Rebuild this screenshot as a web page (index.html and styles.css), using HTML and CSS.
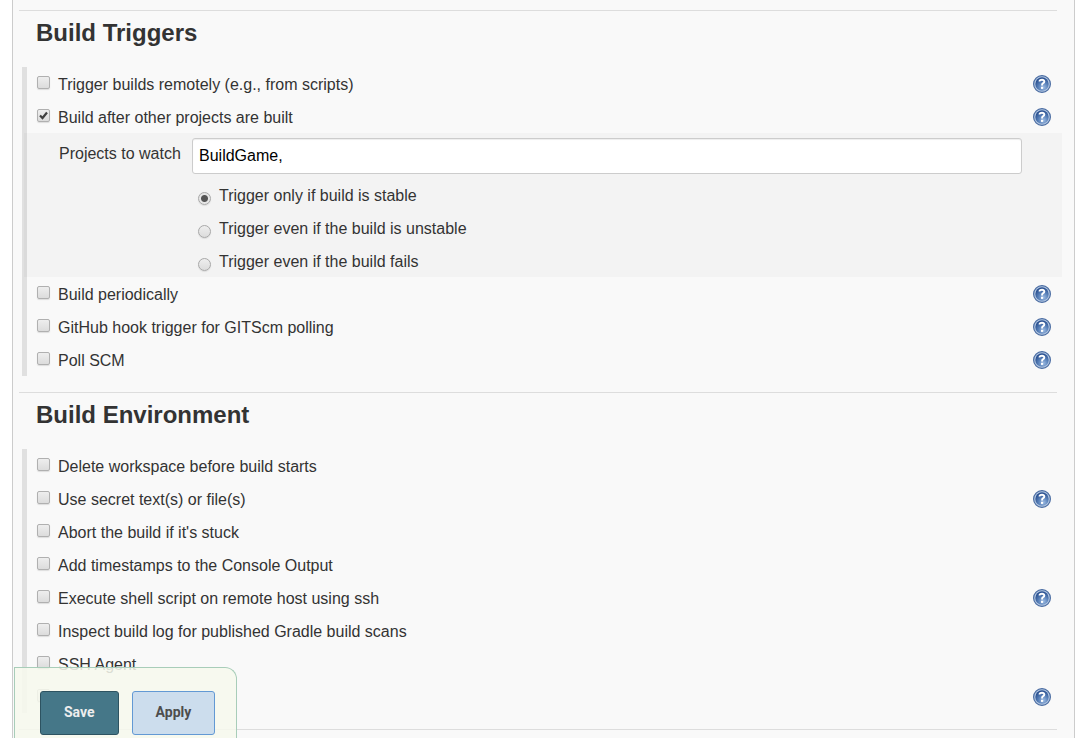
FILE: index.html
```html
<!DOCTYPE html>
<html lang="en">
<head>
<meta charset="utf-8">
<title>Build configuration</title>
<link rel="stylesheet" href="styles.css">
</head>
<body>
<svg class="sprite" aria-hidden="true">
  <defs>
    <radialGradient id="ball" cx="0.6" cy="0.75" r="0.7">
      <stop offset="0" stop-color="#9dbbe2"/>
      <stop offset="0.5" stop-color="#5a82ba"/>
      <stop offset="1" stop-color="#2a5090"/>
    </radialGradient>
    <symbol id="help" viewBox="0 0 18 18">
      <circle cx="9" cy="9" r="8.4" fill="#b4c8e2" stroke="#4a6ca2" stroke-width="1.2"/>
      <circle cx="9" cy="9" r="6.7" fill="url(#ball)"/>
      <path d="M6.6 6.6V5.7Q6.9 4.7 9 4.7T11.3 6.4Q11.3 7.6 10.2 8.2T9.1 9.8V10.4" fill="none" stroke="#fff" stroke-width="1.9"/>
      <rect x="8" y="11.8" width="2.1" height="2.1" fill="#fff"/>
    </symbol>
  </defs>
</svg>
<form class="panel">
  <section class="section">
    <h2 class="title">Build Triggers</h2>
    <div class="group">
      <div class="row"><label class="option"><input class="check" type="checkbox">Trigger builds remotely (e.g., from scripts)</label><button class="help" type="button" aria-label="Help"><svg class="icon"><use href="#help"/></svg></button></div>
      <div class="row"><label class="option"><input class="check" type="checkbox" checked>Build after other projects are built</label><button class="help" type="button" aria-label="Help"><svg class="icon"><use href="#help"/></svg></button></div>
      <div class="nested">
        <label class="caption" for="watch">Projects to watch</label>
        <div class="fields">
          <input class="text" id="watch" type="text" value="BuildGame,">
          <label class="choice"><input class="radio" type="radio" name="threshold" checked>Trigger only if build is stable</label>
          <label class="choice"><input class="radio" type="radio" name="threshold">Trigger even if the build is unstable</label>
          <label class="choice"><input class="radio" type="radio" name="threshold">Trigger even if the build fails</label>
        </div>
      </div>
      <div class="row"><label class="option"><input class="check" type="checkbox">Build periodically</label><button class="help" type="button" aria-label="Help"><svg class="icon"><use href="#help"/></svg></button></div>
      <div class="row"><label class="option"><input class="check" type="checkbox">GitHub hook trigger for GITScm polling</label><button class="help" type="button" aria-label="Help"><svg class="icon"><use href="#help"/></svg></button></div>
      <div class="row"><label class="option"><input class="check" type="checkbox">Poll SCM</label><button class="help" type="button" aria-label="Help"><svg class="icon"><use href="#help"/></svg></button></div>
    </div>
  </section>
  <section class="section">
    <h2 class="title">Build Environment</h2>
    <div class="group">
      <div class="row"><label class="option"><input class="check" type="checkbox">Delete workspace before build starts</label></div>
      <div class="row"><label class="option"><input class="check" type="checkbox">Use secret text(s) or file(s)</label><button class="help" type="button" aria-label="Help"><svg class="icon"><use href="#help"/></svg></button></div>
      <div class="row"><label class="option"><input class="check" type="checkbox">Abort the build if it's stuck</label></div>
      <div class="row"><label class="option"><input class="check" type="checkbox">Add timestamps to the Console Output</label></div>
      <div class="row"><label class="option"><input class="check" type="checkbox">Execute shell script on remote host using ssh</label><button class="help" type="button" aria-label="Help"><svg class="icon"><use href="#help"/></svg></button></div>
      <div class="row"><label class="option"><input class="check" type="checkbox">Inspect build log for published Gradle build scans</label></div>
      <div class="row"><label class="option"><input class="check" type="checkbox">SSH Agent</label></div>
      <div class="row"><label class="option"><input class="check" type="checkbox" aria-label="Build option"></label><button class="help" type="button" aria-label="Help"><svg class="icon"><use href="#help"/></svg></button></div>
    </div>
  </section>
  <hr class="rule">
  <div class="actions">
    <button class="button primary" type="submit">Save</button>
    <button class="button" type="button">Apply</button>
  </div>
</form>
</body>
</html>
```

FILE: styles.css
```css
* { box-sizing: border-box; }
body {
  margin: 0;
  background: #fff;
  color: #333;
  font: 16px/20px "Liberation Sans", Arial, sans-serif;
}
.sprite { position: absolute; width: 0; height: 0; }
.panel {
  min-height: 100vh;
  margin: 0 10px 0 12px;
  padding: 10px 12px 0 6px;
  border: solid #ccc;
  border-width: 0 1px;
  background: #f9f9f9;
}
.section {
  margin: 0 5px 0 0;
  padding-bottom: 16px;
  border-top: 1px solid #ddd;
}
.title {
  margin: 0;
  padding: 8px 17px 20px;
  font-size: 24px;
  line-height: 28px;
}
.group {
  margin: 0 -5px 0 3px;
  border-left: 5px solid #e0e0e0;
}
.row {
  display: flex;
  align-items: center;
  height: 33px;
  padding: 1px 11px 0 10px;
}
.option { display: flex; flex: 1; align-items: center; gap: 8px; padding-top: 2px; }
.check, .radio {
  appearance: none;
  flex: none;
  width: 13px;
  height: 13px;
  margin: 0;
  border: 1px solid #b0b0b0;
  background: linear-gradient(#eee, #dcdcdc);
  box-shadow: 0 1px 1px #ddd;
}
.check { margin-bottom: 6px; border-radius: 2px; }
.check:checked {
  background: url('data:image/svg+xml,<svg xmlns="http://www.w3.org/2000/svg" viewBox="0 0 11 11"><path d="M2 5.5 4.5 8 9 2.5" fill="none" stroke="%23404040" stroke-width="2.2"/></svg>'), linear-gradient(#eee, #dcdcdc);
}
.radio { margin-top: 6px; border-color: #a8a8a8; border-radius: 50%; }
.radio:checked { background: radial-gradient(circle, #555 3px, #e6e6e6 4px); }
.help {
  display: block;
  padding: 0;
  border: 0;
  background: none;
}
.icon { display: block; width: 18px; height: 18px; }
.nested {
  display: flex;
  gap: 13px;
  margin-left: -3px;
  padding: 5px 40px 0 35px;
  background: rgba(0, 0, 0, 0.025);
}
.caption { flex: none; width: 120px; padding-top: 6px; white-space: nowrap; }
.fields { flex: 1; }
.text {
  display: block;
  width: 100%;
  height: 36px;
  padding: 0 6px;
  border: 1px solid #ccc;
  border-radius: 3px;
  background: #fff;
  box-shadow: inset 0 1px 1px rgba(0, 0, 0, 0.07);
  color: #000;
  font: inherit;
}
.choice { display: flex; align-items: center; gap: 8px; height: 33px; padding: 2px 0 0 6px; }
.choice:first-of-type { margin-top: 4px; }
.rule { margin: 0 5px 0 0; border: 0; border-top: 1px solid #ddd; }
.actions {
  position: fixed;
  bottom: 0;
  left: 14px;
  display: flex;
  gap: 13px;
  padding: 23px 21px 3px 25px;
  border: solid #a8cdb9;
  border-width: 1px 1px 0;
  border-radius: 0 12px 0 0;
  background: rgba(247, 249, 238, 0.86);
}
.button {
  height: 44px;
  padding: 0 23px 2px;
  border: 1px solid #6299d4;
  border-radius: 3px;
  background: #ccdded;
  color: #4d4d4d;
  font: bold 14px/20px Roboto, "Liberation Sans", sans-serif;
}
.primary { border-color: #2d5361; background: #457788; color: #eee; }
```
